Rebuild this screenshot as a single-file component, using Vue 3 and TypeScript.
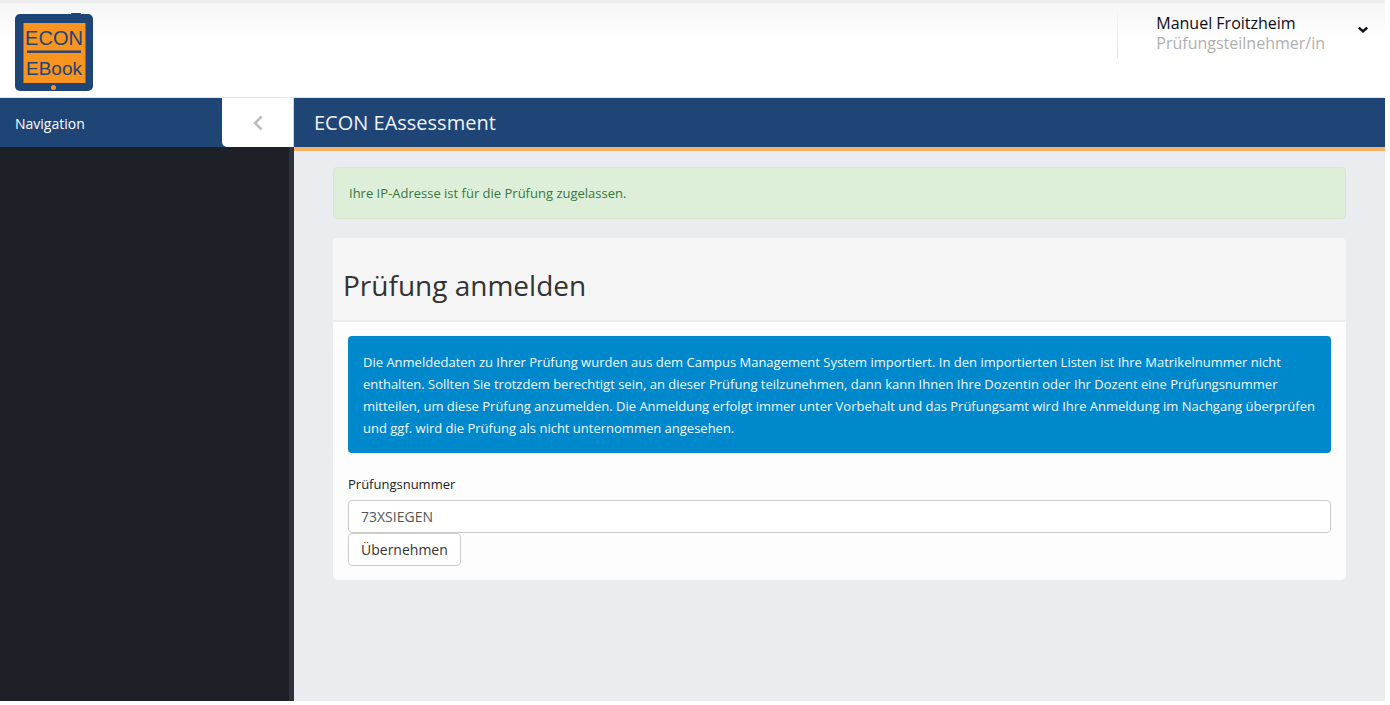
<script setup lang="ts">
import { ref } from 'vue'

const userName = 'Manuel Froitzheim'
const userRole = 'Prüfungsteilnehmer/in'
const examNumber = ref<string>('73XSIEGEN')
</script>

<template>
  <div class="page">
    <header class="header">
      <a class="logo" href="#" aria-label="ECON EBook">
        <svg width="80" height="80" viewBox="0 0 80 80">
          <rect x="57" y="1" width="10" height="5" rx="1" fill="#1f4576" />
          <rect x="1" y="2" width="78" height="77" rx="5" fill="#1f4576" />
          <rect x="9.5" y="11" width="62" height="60" fill="#f8941f" />
          <text x="40" y="33" text-anchor="middle" font-size="20">ECON</text>
          <rect x="13" y="38.5" width="54" height="2.4" fill="#1f4576" />
          <text x="40" y="63" text-anchor="middle" font-size="19">EBook</text>
          <circle cx="39.5" cy="75.5" r="2.5" fill="#f8941f" />
        </svg>
      </a>
      <div class="user">
        <span class="divider"></span>
        <button class="user-menu" type="button">
          <span class="user-text">
            <span class="user-name">{{ userName }}</span>
            <span class="user-role">{{ userRole }}</span>
          </span>
          <svg class="caret" width="12" height="8" viewBox="0 0 12 8">
            <path d="M1.8 1.6 L6 5.4 L10.2 1.6" fill="none" stroke="#0b0b18" stroke-width="2.5" />
          </svg>
        </button>
      </div>
    </header>

    <div class="body">
      <aside class="sidebar">
        <div class="sidebar-head">
          <span class="sidebar-title">Navigation</span>
          <button class="toggle" type="button" aria-label="Navigation">
            <svg width="10" height="16" viewBox="0 0 10 16">
              <path d="M8.6 1.5 L2 8 L8.6 14.5" fill="none" stroke="#bdbdbd" stroke-width="2.6" />
            </svg>
          </button>
        </div>
        <nav class="nav"></nav>
      </aside>

      <main class="content">
        <div class="title-bar">
          <h2>ECON EAssessment</h2>
        </div>
        <div class="inner">
          <div class="alert">Ihre IP-Adresse ist für die Prüfung zugelassen.</div>
          <section class="panel">
            <div class="panel-head">
              <h1>Prüfung anmelden</h1>
            </div>
            <form class="panel-body" @submit.prevent>
              <p class="info">
                Die Anmeldedaten zu Ihrer Prüfung wurden aus dem Campus Management System importiert. In den
                importierten Listen ist Ihre Matrikelnummer nicht enthalten. Sollten Sie trotzdem berechtigt sein, an
                dieser Prüfung teilzunehmen, dann kann Ihnen Ihre Dozentin oder Ihr Dozent eine Prüfungsnummer
                mitteilen, um diese Prüfung anzumelden. Die Anmeldung erfolgt immer unter Vorbehalt und das
                Prüfungsamt wird Ihre Anmeldung im Nachgang überprüfen und ggf. wird die Prüfung als nicht unternommen
                angesehen.
              </p>
              <label for="exam-number">Prüfungsnummer</label>
              <input id="exam-number" v-model="examNumber" type="text" />
              <button class="submit" type="submit">Übernehmen</button>
            </form>
          </section>
        </div>
      </main>
    </div>
  </div>
</template>

<style>
body {
  background: #fff;
}
</style>

<style scoped>
.page {
  box-sizing: border-box;
  min-height: 100vh;
  padding: 0 5px 4px 0;
  display: flex;
  flex-direction: column;
  font-family: 'Open Sans', 'Noto Sans', sans-serif;
  font-size: 13px;
  line-height: 22px;
  color: #333;
}
.page * {
  box-sizing: border-box;
}
button,
input {
  font: inherit;
}
.header {
  display: flex;
  justify-content: space-between;
  align-items: flex-start;
  height: 98px;
  padding: 9px 16px 0 14px;
  border-top: 3px solid #ededed;
  border-bottom: 1px solid #e6e6e4;
  background: linear-gradient(#f6f6f6, #fff 40px);
}
.logo {
  display: block;
}
.logo svg {
  display: block;
}
.logo text {
  font-family: 'Liberation Sans', Arial, sans-serif;
  fill: #1f4576;
}
.user {
  display: flex;
  gap: 38px;
}
.divider {
  width: 1px;
  height: 46px;
  background: linear-gradient(#f4f4f4, #e4e4e4);
}
.user-menu {
  display: flex;
  align-items: flex-start;
  gap: 32px;
  padding: 1px 0 0;
  border: 0;
  background: none;
  text-align: left;
}
.user-text {
  display: flex;
  flex-direction: column;
  font-size: 16px;
  line-height: 20px;
}
.user-name {
  color: #0b0b18;
}
.user-role {
  color: #b0b0b0;
}
.caret {
  margin-top: 13px;
}
.body {
  flex: 1;
  display: flex;
}
.sidebar {
  flex: 0 0 294px;
  display: flex;
  flex-direction: column;
  background: #1d2127;
}
.sidebar-head {
  display: flex;
  justify-content: space-between;
  height: 49px;
  background: #1f4576;
}
.sidebar-title {
  padding-left: 15px;
  font-size: 14px;
  line-height: 52px;
  color: #fff;
}
.toggle {
  display: flex;
  align-items: center;
  justify-content: center;
  width: 72px;
  padding: 0;
  border: 0;
  border-right: 1px solid #d6d6d6;
  border-bottom-left-radius: 5px;
  background: #fff;
}
.nav {
  flex: 1;
  border-right: 5px solid #2e3139;
}
.content {
  flex: 1;
  min-width: 0;
  background: #ebecf0;
}
.title-bar {
  height: 53px;
  padding-left: 20px;
  border-bottom: 4px solid #f8b266;
  background: #1f4576;
}
.title-bar h2 {
  margin: 0;
  font-size: 20px;
  font-weight: 400;
  line-height: 50px;
  color: #f0f2f6;
}
.inner {
  padding: 16px 39px;
}
.alert {
  margin-bottom: 19px;
  padding: 14px 15px;
  border: 1px solid #d6e9c6;
  border-radius: 4px;
  background: #ddefd8;
  color: #3c763d;
}
.panel {
  border-radius: 5px;
  background: #fdfdfd;
}
.panel-head {
  padding: 27px 10px 15px;
  border-bottom: 2px solid #ececec;
  border-radius: 5px 5px 0 0;
  background: #f5f5f5;
}
.panel-head h1 {
  margin: 0;
  font-size: 28px;
  font-weight: 400;
  line-height: 40px;
  color: #333;
}
.panel-body {
  padding: 14px 15px;
}
.info {
  margin: 0 0 20px;
  padding: 15px 15px 14px;
  border-radius: 4px;
  background: #0088cc;
  color: #f0f9fe;
}
label {
  display: block;
  margin-bottom: 5px;
  color: #222;
}
input {
  display: block;
  width: 100%;
  height: 33px;
  padding: 0 12px;
  border: 1px solid #ccc;
  border-radius: 4px;
  background: #fff;
  color: #555;
}
.submit {
  display: block;
  height: 33px;
  padding: 0 12px;
  border: 1px solid #ccc;
  border-radius: 4px;
  background: #fff;
  color: #333;
}
input,
.submit {
  font-size: 14px;
}
</style>
